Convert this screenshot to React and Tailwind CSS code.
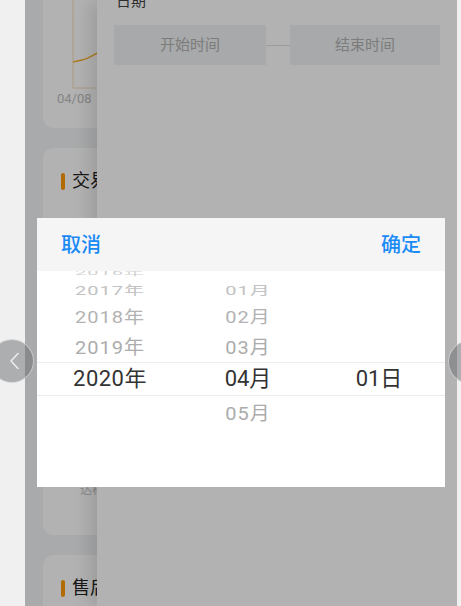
import React from 'react';

const font = { fontFamily: 'Roboto, "Noto Sans CJK SC", sans-serif' };

const yearRows = [
    { label: '2016年', h: 'h-[14px] -mt-[5px]', cls: 'text-[20px] tracking-[1px] text-[#d2d2d2] scale-y-[0.35]' },
    { label: '2017年', h: 'h-[22px]', cls: 'text-[20px] tracking-[1px] text-[#c2c2c2] scale-y-[0.6]' },
    { label: '2018年', h: 'h-[29px]', cls: 'text-[20px] tracking-[1px] text-[#b2b2b2] scale-y-[0.86]' },
    { label: '2019年', h: 'h-[31px]', cls: 'text-[20px] tracking-[1px] text-[#acacac] scale-y-[0.94]' },
    { label: '2020年', h: 'h-[34px]', cls: 'text-[22px] tracking-[0.5px] text-[#333]' },
];

const monthRows = [
    { label: '01月', h: 'h-[22px]', cls: 'text-[20px] tracking-[1px] text-[#c2c2c2] scale-y-[0.6]' },
    { label: '02月', h: 'h-[29px]', cls: 'text-[20px] tracking-[1px] text-[#b2b2b2] scale-y-[0.86]' },
    { label: '03月', h: 'h-[31px]', cls: 'text-[20px] tracking-[1px] text-[#acacac] scale-y-[0.94]' },
    { label: '04月', h: 'h-[34px]', cls: 'text-[22px] text-[#333]' },
    { label: '05月', h: 'h-[34px]', cls: 'text-[20px] tracking-[1px] text-[#acacac] scale-y-[0.94]' },
];

const WheelRow = ({ row }) => (
    <div className={`${row.h} flex items-center justify-center shrink-0`}>
        <span className={`inline-block leading-none ${row.cls}`}>{row.label}</span>
    </div>
);

const Chevron = () => (
    <svg width="11" height="18" viewBox="0 0 11 18" fill="none">
        <path d="M9 1.5 L2 9 L9 16.5" stroke="#ececec" strokeWidth="1.6" strokeLinecap="round" strokeLinejoin="round" />
    </svg>
);

const SectionTitle = ({ children }) => (
    <div className="flex items-center gap-[7px]">
        <span className="w-[4px] h-[17px] rounded-full bg-[#ff9a00]" />
        <span className="text-[18px] leading-none text-[#222] whitespace-nowrap">{children}</span>
    </div>
);

export default function App() {
    return (
        <div className="relative w-[461px] h-[606px] overflow-hidden bg-[#f0f0f0]" style={font}>
            {/* phone screen */}
            <div className="relative ml-[25px] w-[432px] h-full overflow-hidden bg-[#f2f4f5]">
                <div className="px-[18px] -mt-[60px] flex flex-col gap-[20px]">
                    <div className="h-[188px] bg-white rounded-[10px] flex flex-col overflow-hidden">
                        <svg width="396" height="150" viewBox="0 0 396 150" fill="none">
                            <path d="M30 0 V148 H396" stroke="#f3dcb8" strokeWidth="1" />
                            <path d="M30 122 L39 120 C45 119 50 115 60 110" stroke="#f7b22d" strokeWidth="1.6" />
                        </svg>
                        <div className="h-[18px] pl-[14px] text-[13px] leading-[18px] text-[#bcbcbc]">04/08</div>
                    </div>

                    <div className="h-[387px] bg-white rounded-[10px] pt-[24px] px-[18px] flex flex-col">
                        <SectionTitle>交易数据</SectionTitle>
                        <div className="mt-auto mb-[36px] pl-[19px] text-[12px] text-[#c4c4c4]">达标率</div>
                    </div>

                    <div className="h-[120px] bg-white rounded-[10px] pt-[24px] px-[18px]">
                        <SectionTitle>售后数据</SectionTitle>
                    </div>
                </div>

                {/* filter drawer */}
                <div className="absolute top-0 right-0 bottom-0 w-[360px] bg-white shadow-[-8px_0_16px_rgba(0,0,0,0.12)] px-[17px]">
                    <div className="-mt-[9px] h-[20px] pl-[2px] text-[15px] leading-[20px] text-[#444]">日期</div>
                    <div className="mt-[14px] flex items-center">
                        <div className="w-[152px] h-[40px] bg-[#f0f2f4] flex items-center justify-center text-[15px] text-[#b3b3b3]">开始时间</div>
                        <div className="w-[24px] h-px bg-[#e2e2e2]" />
                        <div className="flex-1 h-[40px] bg-[#f0f2f4] flex items-center justify-center text-[15px] text-[#b3b3b3]">结束时间</div>
                    </div>
                </div>

                <div className="absolute inset-0 bg-black/30" />
            </div>

            {/* date picker */}
            <div className="absolute left-[37px] top-[218px] w-[408px] flex flex-col">
                <div className="h-[53px] bg-[#f5f5f5] flex items-center justify-between px-[24px] text-[20px] font-medium text-[#1a8af5]">
                    <span>取消</span>
                    <span>确定</span>
                </div>
                <div className="relative h-[216px] bg-white overflow-hidden">
                    <div className="absolute left-0 right-0 top-[91px] h-[34px] border-y border-[#ececec]" />
                    <div className="relative grid grid-cols-[146px_130px_132px]">
                        <div className="flex flex-col">
                            {yearRows.map((row) => (
                                <WheelRow key={row.label} row={row} />
                            ))}
                        </div>
                        <div className="flex flex-col pt-[9px]">
                            {monthRows.map((row) => (
                                <WheelRow key={row.label} row={row} />
                            ))}
                        </div>
                        <div className="flex flex-col pt-[91px]">
                            <WheelRow row={{ label: '01日', h: 'h-[34px]', cls: 'text-[22px] text-[#333]' }} />
                        </div>
                    </div>
                </div>
            </div>

            {/* swipe arrows */}
            <div className="absolute -left-[10px] top-[339px] w-[44px] h-[44px] rounded-full bg-[rgba(105,108,112,0.5)] border-[1.5px] border-white/50 flex items-center justify-center pl-[4px]">
                <Chevron />
            </div>
            <div className="absolute left-[448px] top-[340px] w-[44px] h-[44px] rounded-full bg-[rgba(105,108,112,0.5)] border-[1.5px] border-white/50" />
        </div>
    );
}
